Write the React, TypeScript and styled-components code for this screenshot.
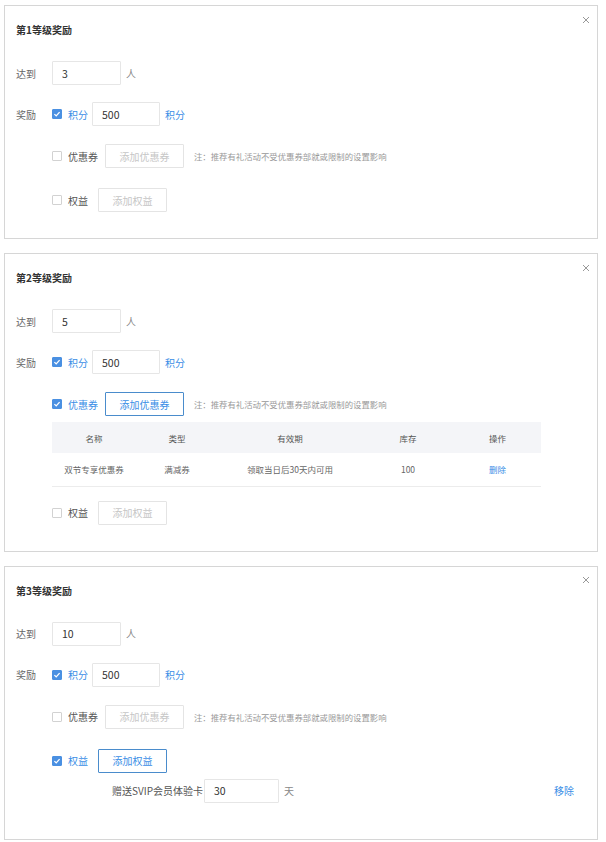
import React from "react";
import styled, { createGlobalStyle, css } from "styled-components";

const GlobalStyle = createGlobalStyle`
  html, body { margin: 0; background: #ffffff; }
  body {
    padding: 5px 8px 4px 4px;
    font-family: "Noto Sans CJK SC", "Noto Sans", "Liberation Sans", sans-serif;
    color: #666;
  }
  * { box-sizing: border-box; }
`;

const BLUE = "#3a8ee6";

const Page = styled.div`
  display: flex;
  flex-direction: column;
  gap: 14px;
`;

const Card = styled.section`
  position: relative;
  border: 1px solid #d6d6d6;
  padding: 17px 23px 26px 11px;
  background: #fff;
`;

const Close = styled.button`
  position: absolute;
  top: 9px;
  right: 7px;
  width: 9px;
  height: 9px;
  padding: 0;
  border: 0;
  background: transparent;
  display: flex;
  align-items: center;
  justify-content: center;
`;

const Title = styled.h3`
  margin: 0;
  height: 14px;
  line-height: 14px;
  font-size: 10px;
  font-weight: 700;
  color: #333;
`;

const Form = styled.div`
  display: flex;
  flex-direction: column;
  margin-top: 24px;
`;

const Row = styled.div<{ $mt?: number; $mb?: number; $pl?: number }>`
  display: flex;
  align-items: center;
  height: 24px;
  margin-top: ${(p) => p.$mt ?? 0}px;
  margin-bottom: ${(p) => p.$mb ?? 0}px;
  padding-left: ${(p) => p.$pl ?? 0}px;
`;

const Label = styled.span`
  width: 36px;
  flex: none;
  font-size: 10px;
  color: #666;
`;

const Box = styled.span<{ $checked?: boolean }>`
  width: 10px;
  height: 10px;
  flex: none;
  border-radius: 1px;
  display: inline-flex;
  align-items: center;
  justify-content: center;
  ${(p) =>
    p.$checked
      ? css`
          background: #4a90e2;
          border: 1px solid #4a90e2;
        `
      : css`
          background: #fff;
          border: 1px solid #d2d2d2;
        `}
`;

const CheckText = styled.span<{ $checked?: boolean; $gap: number }>`
  margin-left: 6px;
  margin-right: ${(p) => p.$gap}px;
  font-size: 10px;
  color: ${(p) => (p.$checked ? BLUE : "#555")};
`;

const Input = styled.input<{ $w: number }>`
  width: ${(p) => p.$w}px;
  height: 24px;
  border: 1px solid #e6e6e6;
  border-radius: 1px;
  padding: 0 0 0 9px;
  font-family: inherit;
  font-size: 10.5px;
  color: #333;
  outline: none;
  background: #fff;
`;

const Unit = styled.span<{ $blue?: boolean }>`
  margin-left: 5px;
  font-size: 10px;
  color: ${(p) => (p.$blue ? BLUE : "#888")};
`;

const Btn = styled.button<{ $active?: boolean; $w: number }>`
  width: ${(p) => p.$w}px;
  height: 24px;
  padding: 0;
  border-radius: 1px;
  font-family: inherit;
  font-size: 10px;
  background: #fff;
  ${(p) =>
    p.$active
      ? css`
          border: 1px solid #4a8ccc;
          color: ${BLUE};
        `
      : css`
          border: 1px solid #e4e4e4;
          color: #c6c6c6;
        `}
`;

const Hint = styled.span`
  margin-left: 10px;
  font-size: 8.4px;
  color: #999;
  white-space: nowrap;
`;

const Table = styled.table`
  margin: 6px 0 0 36px;
  width: 489px;
  border-collapse: collapse;
  font-size: 8.5px;
  color: #666;
`;

const Th = styled.th<{ $w: number }>`
  width: ${(p) => p.$w}px;
  height: 31px;
  padding: 0;
  background: #f4f5f8;
  font-weight: 400;
  color: #555;
  text-align: center;
`;

const Td = styled.td<{ $link?: boolean }>`
  height: 33px;
  padding: 0;
  text-align: center;
  border-bottom: 1px solid #ececec;
  color: ${(p) => (p.$link ? BLUE : "#666")};
`;

const SubLabel = styled.span`
  font-size: 10px;
  color: #555;
  margin-right: 1px;
`;

const Remove = styled.span`
  margin-left: auto;
  font-size: 10px;
  color: ${BLUE};
`;

const CheckIcon = () => (
  <svg width="8" height="8" viewBox="0 0 8 8">
    <path d="M1.4 4.1 L3.2 5.9 L6.6 2.1" fill="none" stroke="#fff" strokeWidth="1.3" />
  </svg>
);

const XIcon = () => (
  <svg width="8" height="8" viewBox="0 0 8 8">
    <path d="M1 1 L7 7 M7 1 L1 7" stroke="#999" strokeWidth="1" />
  </svg>
);

const Check = ({ checked }: { checked?: boolean }) => (
  <Box $checked={checked}>{checked ? <CheckIcon /> : null}</Box>
);

type Level = {
  n: number;
  people: string;
  coupon: boolean;
  rights: boolean;
};

const levels: Level[] = [
  { n: 1, people: "3", coupon: false, rights: false },
  { n: 2, people: "5", coupon: true, rights: false },
  { n: 3, people: "10", coupon: false, rights: true },
];

const LevelCard = ({ level }: { level: Level }) => (
  <Card>
    <Close aria-label="关闭">
      <XIcon />
    </Close>
    <Title>第{level.n}等级奖励</Title>
    <Form>
      <Row>
        <Label>达到</Label>
        <Input $w={69} readOnly value={level.people} />
        <Unit>人</Unit>
      </Row>
      <Row $mt={17}>
        <Label>奖励</Label>
        <Check checked />
        <CheckText $checked $gap={4}>积分</CheckText>
        <Input $w={68} readOnly value="500" />
        <Unit $blue>积分</Unit>
      </Row>
      <Row $mt={18}>
        <Label />
        <Check checked={level.coupon} />
        <CheckText $checked={level.coupon} $gap={7}>优惠券</CheckText>
        <Btn $w={79} $active={level.coupon}>添加优惠券</Btn>
        <Hint>注：推荐有礼活动不受优惠券部就或限制的设置影响</Hint>
      </Row>
      {level.coupon && (
        <Table>
          <thead>
            <tr>
              <Th $w={84}>名称</Th>
              <Th $w={82}>类型</Th>
              <Th $w={144}>有效期</Th>
              <Th $w={92}>库存</Th>
              <Th $w={87}>操作</Th>
            </tr>
          </thead>
          <tbody>
            <tr>
              <Td>双节专享优惠券</Td>
              <Td>满减券</Td>
              <Td>领取当日后30天内可用</Td>
              <Td>100</Td>
              <Td $link>删除</Td>
            </tr>
          </tbody>
        </Table>
      )}
      <Row $mt={level.coupon ? 14 : 20}>
        <Label />
        <Check checked={level.rights} />
        <CheckText $checked={level.rights} $gap={10}>权益</CheckText>
        <Btn $w={69} $active={level.rights}>添加权益</Btn>
      </Row>
      {level.rights && (
        <Row $mt={6} $mb={10} $pl={96}>
          <SubLabel>赠送SVIP会员体验卡</SubLabel>
          <Input $w={75} readOnly value="30" />
          <Unit>天</Unit>
          <Remove>移除</Remove>
        </Row>
      )}
    </Form>
  </Card>
);

export default function App() {
  return (
    <>
      <GlobalStyle />
      <Page>
        {levels.map((l) => (
          <LevelCard key={l.n} level={l} />
        ))}
      </Page>
    </>
  );
}
